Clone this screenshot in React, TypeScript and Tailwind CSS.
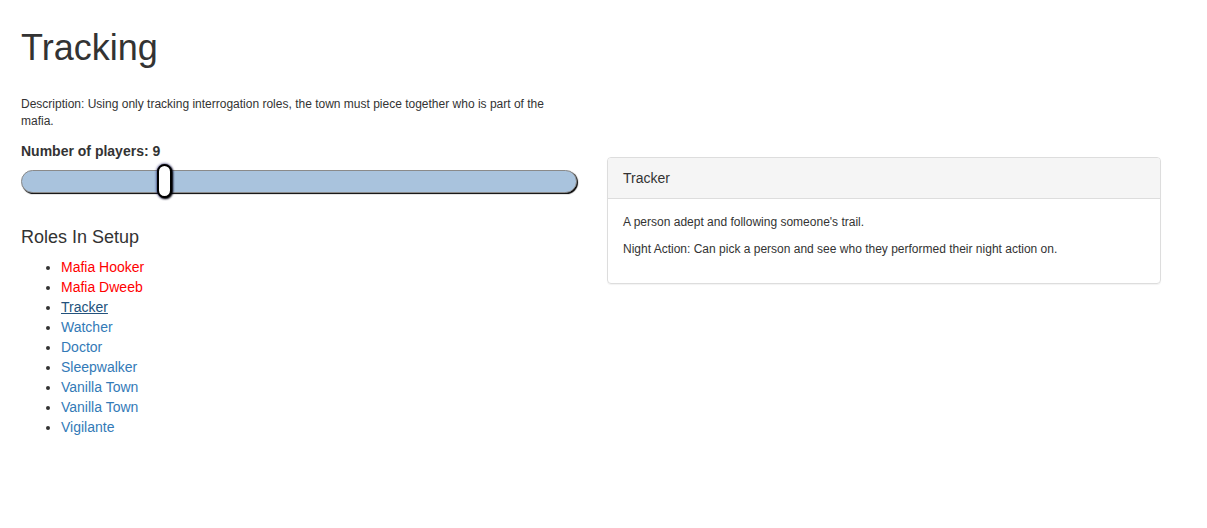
import React from "react";

const roles: { name: string; cls: string }[] = [
  { name: "Mafia Hooker", cls: "text-[#ff0000]" },
  { name: "Mafia Dweeb", cls: "text-[#ff0000]" },
  { name: "Tracker", cls: "text-[#23527c] underline" },
  { name: "Watcher", cls: "text-[#337ab7]" },
  { name: "Doctor", cls: "text-[#337ab7]" },
  { name: "Sleepwalker", cls: "text-[#337ab7]" },
  { name: "Vanilla Town", cls: "text-[#337ab7]" },
  { name: "Vanilla Town", cls: "text-[#337ab7]" },
  { name: "Vigilante", cls: "text-[#337ab7]" },
];

export default function App() {
  return (
    <div className="min-h-[528px] bg-white text-[#333333] font-['Liberation_Sans',Arial,sans-serif] px-[21px]">
      <h1 className="pt-[28px] text-[36px] leading-[40px] font-normal">Tracking</h1>
      <div className="flex gap-[30px] mt-[28px]">
        <div className="w-[556px] shrink-0">
          <p className="text-[12px] leading-[17px]">
            Description: Using only tracking interrogation roles, the town must piece together who is part of the mafia.
          </p>
          <div className="mt-[12px] text-[14px] leading-[18px] font-bold">Number of players: 9</div>
          <div className="relative mt-[9px] h-[24px]">
            <div className="absolute left-0 right-0 top-[1px] h-[23px] rounded-full bg-[#a9c3dd] border border-[#8a8a8a] shadow-[1px_1px_1px_#000]" />
            <div className="absolute left-[136px] top-[-5px] w-[15px] h-[34px] rounded-[8px] bg-white border-[2px] border-[#000] shadow-[1px_1px_2px_#000,0_0_3px_#0d0d5c]" />
          </div>
          <h3 className="mt-[34px] text-[18px] leading-[20px] font-normal">Roles In Setup</h3>
          <ul className="mt-[10px] list-disc pl-[40px] text-[14px] leading-[20px]">
            {roles.map((r, i) => (
              <li key={i}>
                <a className={r.cls}>{r.name}</a>
              </li>
            ))}
          </ul>
        </div>
        <div className="w-[554px] shrink-0 pt-[61px]">
          <div className="border border-[#dddddd] rounded-[4px] shadow-[0_1px_1px_rgba(0,0,0,0.05)]">
            <div className="bg-[#f5f5f5] border-b border-[#dddddd] px-[15px] h-[41px] flex items-center text-[14px] rounded-t-[3px]">
              Tracker
            </div>
            <div className="px-[15px] pt-[15px] pb-[25px] text-[12px] leading-[17px]">
              <p>A person adept and following someone's trail.</p>
              <p className="mt-[10px]">Night Action: Can pick a person and see who they performed their night action on.</p>
            </div>
          </div>
        </div>
      </div>
    </div>
  );
}
